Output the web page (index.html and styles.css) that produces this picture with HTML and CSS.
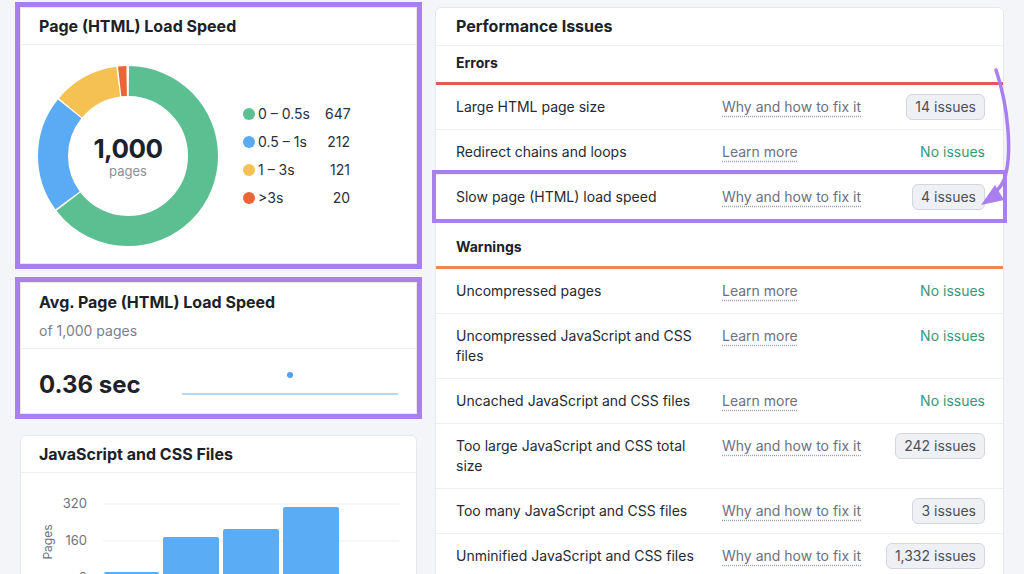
FILE: index.html
```html
<!DOCTYPE html>
<html lang="en">
<head>
    <meta charset="UTF-8">
    <meta name="viewport" content="width=device-width, initial-scale=1.0">
    <title>Site Audit - Site Performance</title>
    <link rel="stylesheet" href="styles.css">
</head>
<body>
    <div class="page">
        <div class="col-left">
            <section class="card marked">
                <h2 class="card-title">Page (HTML) Load Speed</h2>
                <div class="donut-body">
                    <div class="donut">
                        <svg width="180" height="180" viewBox="0 0 180 180">
                            <g transform="rotate(-90 90 90)" fill="none" stroke-width="30">
                                <circle cx="90" cy="90" r="75" pathLength="1000" stroke="#5cbf92" stroke-dasharray="644 1000" stroke-dashoffset="-2"></circle>
                                <circle cx="90" cy="90" r="75" pathLength="1000" stroke="#5aaaf4" stroke-dasharray="209 1000" stroke-dashoffset="-649"></circle>
                                <circle cx="90" cy="90" r="75" pathLength="1000" stroke="#f4c152" stroke-dasharray="118 1000" stroke-dashoffset="-861"></circle>
                                <circle cx="90" cy="90" r="75" pathLength="1000" stroke="#eb6536" stroke-dasharray="15 1000" stroke-dashoffset="-982"></circle>
                            </g>
                        </svg>
                        <div class="donut-label">
                            <span class="donut-num">1,000</span>
                            <span class="donut-sub">pages</span>
                        </div>
                    </div>
                    <ul class="legend">
                        <li><i class="dot green"></i><span>0 – 0.5s</span><b>647</b></li>
                        <li><i class="dot blue"></i><span>0.5 – 1s</span><b>212</b></li>
                        <li><i class="dot yellow"></i><span>1 – 3s</span><b>121</b></li>
                        <li><i class="dot red"></i><span>&gt;3s</span><b>20</b></li>
                    </ul>
                </div>
            </section>

            <section class="card marked avg">
                <div class="avg-head">
                    <h2 class="card-title flat">Avg. Page (HTML) Load Speed</h2>
                    <div class="avg-sub">of 1,000 pages</div>
                </div>
                <div class="avg-body">
                    <span class="avg-value">0.36 sec</span>
                    <svg class="spark" width="216" height="32" viewBox="0 0 216 32">
                        <line x1="0" y1="25" x2="216" y2="25" stroke="#9dcdf2" stroke-width="1.5"></line>
                        <circle cx="108" cy="6" r="3" fill="#4fa3ee"></circle>
                    </svg>
                </div>
            </section>

            <section class="card files">
                <h2 class="card-title">JavaScript and CSS Files</h2>
                <svg class="bars" width="397" height="110" viewBox="0 0 397 110">
                    <text class="axis-title" x="0" y="0" transform="translate(31 69) rotate(-90)" text-anchor="middle">Pages</text>
                    <text class="tick" x="66" y="35" text-anchor="end">320</text>
                    <text class="tick" x="66" y="72" text-anchor="end">160</text>
                    <text class="tick" x="66" y="109" text-anchor="end">0</text>
                    <line x1="82" y1="31" x2="378" y2="31" stroke="#eceef1"></line>
                    <line x1="82" y1="68" x2="378" y2="68" stroke="#eceef1"></line>
                    <line x1="82" y1="105" x2="378" y2="105" stroke="#eceef1"></line>
                    <rect x="83" y="99" width="55" height="11" rx="2" fill="#5aacf5"></rect>
                    <rect x="142" y="64" width="56" height="46" rx="2" fill="#5aacf5"></rect>
                    <rect x="202" y="56" width="56" height="54" rx="2" fill="#5aacf5"></rect>
                    <rect x="262" y="34" width="56" height="76" rx="2" fill="#5aacf5"></rect>
                </svg>
            </section>
        </div>

        <section class="card issues">
            <h2 class="card-title wide">Performance Issues</h2>

            <div class="group errors">Errors</div>
            <div class="row">
                <span>Large HTML page size</span>
                <span><a class="hint">Why and how to fix it</a></span>
                <span class="badge">14 issues</span>
            </div>
            <div class="row">
                <span>Redirect chains and loops</span>
                <span><a class="hint">Learn more</a></span>
                <span class="ok">No issues</span>
            </div>
            <div class="row marked">
                <span>Slow page (HTML) load speed</span>
                <span><a class="hint">Why and how to fix it</a></span>
                <span class="badge">4 issues</span>
            </div>

            <div class="group warnings">Warnings</div>
            <div class="row">
                <span>Uncompressed pages</span>
                <span><a class="hint">Learn more</a></span>
                <span class="ok">No issues</span>
            </div>
            <div class="row">
                <span>Uncompressed JavaScript and CSS files</span>
                <span><a class="hint">Learn more</a></span>
                <span class="ok">No issues</span>
            </div>
            <div class="row">
                <span>Uncached JavaScript and CSS files</span>
                <span><a class="hint">Learn more</a></span>
                <span class="ok">No issues</span>
            </div>
            <div class="row">
                <span>Too large JavaScript and CSS total size</span>
                <span><a class="hint">Why and how to fix it</a></span>
                <span class="badge">242 issues</span>
            </div>
            <div class="row">
                <span>Too many JavaScript and CSS files</span>
                <span><a class="hint">Why and how to fix it</a></span>
                <span class="badge">3 issues</span>
            </div>
            <div class="row">
                <span>Unminified JavaScript and CSS files</span>
                <span><a class="hint">Why and how to fix it</a></span>
                <span class="badge">1,332 issues</span>
            </div>
        </section>
    </div>

    <!-- callout arrow drawn over the table -->
    <svg class="arrow" width="1024" height="574" viewBox="0 0 1024 574">
        <path d="M996 70 C1008 105 1013 155 1004 180 C1001 187 997 191 992 195" fill="none" stroke="#a97ff0" stroke-width="3.5" stroke-linecap="round"></path>
        <polygon points="981,205 995,185 1004,200" fill="#a97ff0"></polygon>
    </svg>
</body>
</html>
```

FILE: styles.css
```css
* {
    margin: 0;
    padding: 0;
    box-sizing: border-box;
}

body {
    background: #f4f5f9;
    font-family: Inter, "Noto Sans", Arial, sans-serif;
    color: #1d2129;
    overflow: hidden;
    height: 574px;
}

.page {
    display: flex;
    align-items: flex-start;
    gap: 18px;
    padding: 7px 20px 0 20px;
}

.col-left {
    width: 397px;
    display: flex;
    flex-direction: column;
    gap: 18px;
}

.card {
    background: #fff;
    border: 1px solid #e6e8ec;
    border-radius: 6px;
}

.marked {
    outline: 5px solid #a97ff0;
    border-radius: 0;
}

.card-title {
    font-size: 16px;
    line-height: 20px;
    font-weight: 700;
    padding: 8px 18px 8px;
    border-bottom: 1px solid #eceef2;
}

.card-title.flat {
    padding: 0;
    border: none;
}

.card-title.wide {
    padding: 8px 20px 9px;
}

/* donut */
.donut-body {
    display: flex;
    align-items: center;
    gap: 25px;
    padding: 21px 17px 17px;
}

.donut {
    display: grid;
    place-items: center;
    width: 180px;
    height: 180px;
}

.donut > * {
    grid-area: 1 / 1;
}

.donut-label {
    display: flex;
    flex-direction: column;
    align-items: center;
    padding-top: 2px;
}

.donut-num {
    font-size: 26px;
    line-height: 28px;
    font-weight: 700;
    letter-spacing: -0.5px;
}

.donut-sub {
    font-size: 13px;
    line-height: 16px;
    color: #8a8f9b;
}

.legend {
    list-style: none;
    display: flex;
    flex-direction: column;
    gap: 8px;
}

.legend li {
    display: grid;
    grid-template-columns: 12px 64px 25px;
    column-gap: 3px;
    align-items: center;
    font-size: 14px;
    line-height: 20px;
    color: #2b303a;
}

.legend b {
    font-weight: 400;
    text-align: right;
}

.dot {
    width: 12px;
    height: 12px;
    border-radius: 50%;
}

.dot.green { background: #5cbf92; }
.dot.blue { background: #5aaaf4; }
.dot.yellow { background: #f4c152; }
.dot.red { background: #eb6536; }

/* average */
.avg-head {
    padding: 9px 18px 7px;
    border-bottom: 1px solid #eceef2;
}

.avg-sub {
    margin-top: 9px;
    font-size: 14px;
    line-height: 20px;
    color: #7a7f8b;
}

.avg-body {
    height: 64px;
    display: flex;
    align-items: center;
    justify-content: space-between;
    padding: 8px 18px 0;
}

.avg-value {
    font-size: 24px;
    line-height: 28px;
    font-weight: 700;
}

.files {
    margin-top: 3px;
    height: 160px;
}

.bars {
    display: block;
}

.tick {
    font-size: 13px;
    fill: #6d7280;
}

.axis-title {
    font-size: 12px;
    fill: #6d7280;
}

/* issues table */
.issues {
    width: 569px;
    height: 600px;
}

.group {
    font-size: 14px;
    line-height: 20px;
    font-weight: 700;
    padding: 7px 20px 9px;
}

.errors {
    border-bottom: 3px solid #e0585b;
}

.warnings {
    padding-top: 17px;
    border-top: 1px solid #eceef2;
    border-bottom: 3px solid #e98a50;
}

.row {
    display: grid;
    grid-template-columns: 256px 1fr auto;
    column-gap: 10px;
    align-items: start;
    padding: 12px 18px 12px 20px;
    font-size: 14px;
    line-height: 20px;
    color: #262a33;
}

.row + .row {
    border-top: 1px solid #eceef2;
}

.row.marked {
    outline-width: 4px;
}

.hint {
    color: #6c7180;
    text-decoration: underline dotted #9aa0ac;
    text-underline-offset: 4px;
}

.ok {
    color: #3a9677;
    text-align: right;
}

.badge {
    justify-self: end;
    margin: -3px 0;
    height: 26px;
    line-height: 24px;
    padding: 0 8px;
    background: #eef0f4;
    border: 1px solid #d3d6dd;
    border-radius: 6px;
    color: #4b505c;
}

.arrow {
    position: absolute;
    top: 0;
    left: 0;
    pointer-events: none;
}
```
